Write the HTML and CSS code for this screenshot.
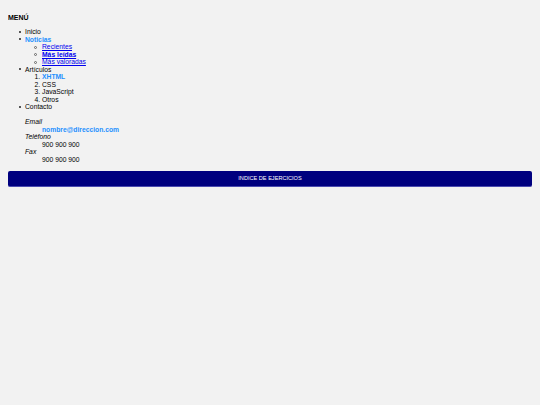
FILE: index.html
```html
<!DOCTYPE html>
<html lang="es">
<head>
<meta charset="utf-8">
<title>Menú</title>
<link rel="stylesheet" href="styles.css">
</head>
<body>
<h1 class="title">MENÚ</h1>
<ul class="menu">
  <li>Inicio</li>
  <li><span class="hl">Noticias</span>
    <ul class="sub">
      <li><a href="#">Recientes</a></li>
      <li><a href="#" class="strong">Más leídas</a></li>
      <li><a href="#">Más valoradas</a></li>
    </ul>
  </li>
  <li>Artículos
    <ol class="sub">
      <li><span class="hl">XHTML</span></li>
      <li>CSS</li>
      <li>JavaScript</li>
      <li>Otros</li>
    </ol>
  </li>
  <li>Contacto
    <dl class="contact">
      <dt>Email</dt>
      <dd><span class="hl">nombre@direccion.com</span></dd>
      <dt>Teléfono</dt>
      <dd>900 900 900</dd>
      <dt>Fax</dt>
      <dd>900 900 900</dd>
    </dl>
  </li>
</ul>
<div class="index-bar"><a href="#" class="index-link">INDICE DE EJERCICIOS</a></div>
</body>
</html>
```

FILE: styles.css
```css
html {
  background: #f2f2f2;
}
body {
  margin: 8px;
  font-family: "Liberation Sans", Arial, sans-serif;
  font-size: 6.75px;
  line-height: 7.5px;
  color: #000;
}
.title {
  font-size: 7px;
  font-weight: bold;
  margin: 6px 0 6px;
  line-height: 8px;
}
.menu {
  margin: 0;
  padding-left: 17px;
  list-style: none;
}
.menu > li::before {
  content: "";
  display: inline-block;
  width: 2px;
  height: 2px;
  border-radius: 50%;
  background: #222;
  margin-left: -6px;
  margin-right: 4px;
  vertical-align: 1.5px;
}
.sub {
  margin: 0;
  padding-left: 17px;
}
ul.sub {
  list-style: none;
}
ul.sub > li::before {
  content: "";
  display: inline-block;
  box-sizing: border-box;
  width: 3px;
  height: 3px;
  border: 1px solid #666;
  border-radius: 50%;
  margin-left: -8px;
  margin-right: 5px;
  vertical-align: 0.5px;
}
ol.sub > li::before {
  content: none;
}
.hl {
  color: #1e90ff;
  font-weight: bold;
}
a {
  color: #0000ee;
}
a.strong {
  font-weight: bold;
}
.contact {
  margin: 7.5px 0 0;
}
.contact dt {
  font-style: italic;
}
.contact dd {
  margin-left: 17px;
}
.index-bar {
  margin-top: 8px;
  background: #00007f;
  border-radius: 2px;
  border-bottom: 1px solid #4b4bb0;
  height: 15px;
  display: flex;
  align-items: center;
  justify-content: center;
}
.index-link {
  color: #fff;
  text-decoration: none;
  font-size: 5.6px;
}
```
